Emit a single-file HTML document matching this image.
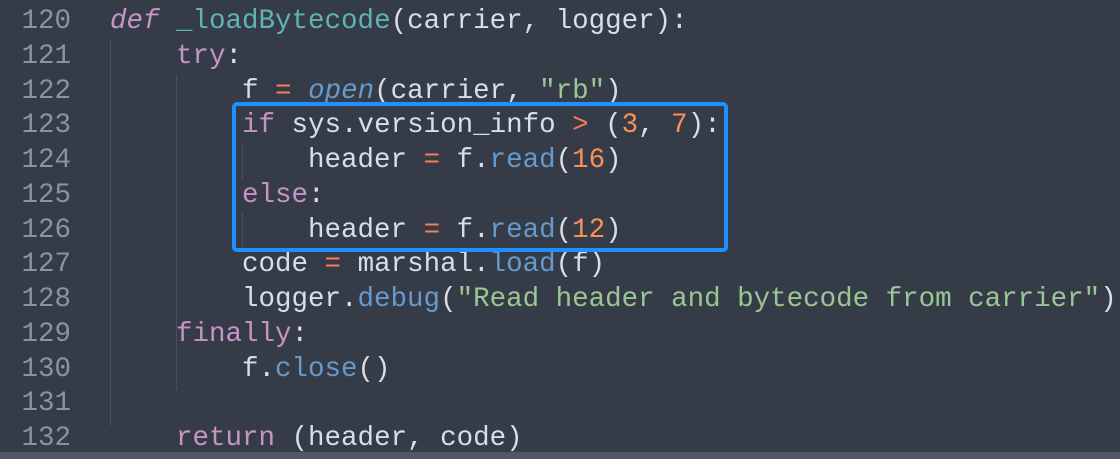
<!DOCTYPE html>
<html><head><meta charset="utf-8"><style>
html,body{margin:0;padding:0;}
body{width:1120px;height:459px;background:#363c47;position:relative;overflow:hidden;font-family:"Liberation Mono",monospace;font-size:27.5px;}
.ln{position:absolute;left:0;width:71px;text-align:right;color:#8d939b;line-height:34.75px;}
.c{position:absolute;left:110px;white-space:pre;color:#d8dee9;line-height:34.75px;}
.k{color:#c594c5}.i{font-style:italic}.fn{color:#5fb3b3}.op{color:#f97b58}.b{color:#6699cc}.n{color:#f99157}.s{color:#99c794}
.g{position:absolute;border-left:1px dotted #5a616c;}
.box{position:absolute;left:232px;top:102px;width:488px;height:142px;border:4px solid #1e90ff;border-radius:5px;}
.bar{position:absolute;left:0;top:452px;width:1120px;height:7px;background:#4e5866;}
</style></head><body>
<div class="g" style="left:110px;top:40px;height:385px"></div>
<div class="g" style="left:176px;top:75px;height:315px"></div>
<div class="g" style="left:242px;top:144px;height:35px"></div>
<div class="g" style="left:242px;top:213px;height:35px"></div>
<div class="ln" style="top:5px">120<br>121<br>122<br>123<br>124<br>125<br>126<br>127<br>128<br>129<br>130<br>131<br>132</div>
<div class="c" style="top:5px"><span class="k i">def</span> <span class="fn">_loadBytecode</span>(carrier, logger):
    <span class="k">try</span>:
        f <span class="op">=</span> <span class="b i">open</span>(carrier, <span class="s">"rb"</span>)
        <span class="k">if</span> sys.version_info <span class="op">&gt;</span> (<span class="n">3</span>, <span class="n">7</span>):
            header <span class="op">=</span> f.<span class="b">read</span>(<span class="n">16</span>)
        <span class="k">else</span>:
            header <span class="op">=</span> f.<span class="b">read</span>(<span class="n">12</span>)
        code <span class="op">=</span> marshal.<span class="b">load</span>(f)
        logger.<span class="b">debug</span>(<span class="s">"Read header and bytecode from carrier"</span>)
    <span class="k">finally</span>:
        f.<span class="b">close</span>()

    <span class="k">return</span> (header, code)</div>
<div class="box"></div>
<div class="bar"></div>
</body></html>
